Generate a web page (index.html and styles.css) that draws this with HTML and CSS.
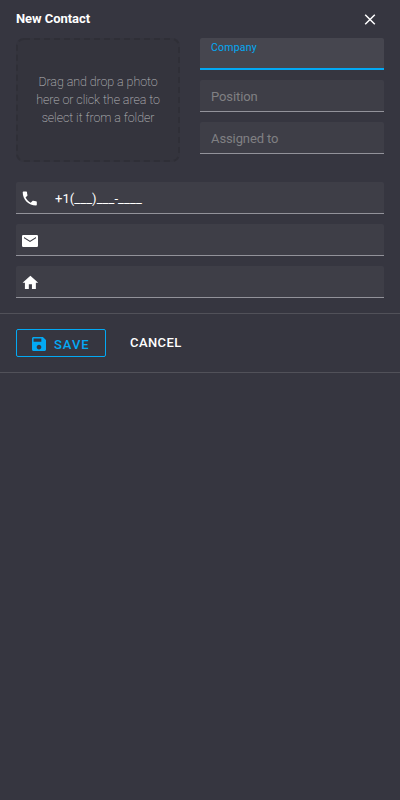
FILE: index.html
```html
<!DOCTYPE html>
<html lang="en">
<head>
<meta charset="utf-8">
<title>New Contact</title>
<link rel="stylesheet" href="styles.css">
</head>
<body>
<main class="form">
  <header class="header">
    <h1 class="title">New Contact</h1>
    <button class="close" aria-label="Close"><svg width="12" height="12" viewBox="0 0 12 12"><path d="M1.200 1.700l9.600 9.600M10.800 1.700l-9.600 9.600" stroke="currentColor" stroke-width="1.500"/></svg></button>
  </header>
  <section class="top">
    <div class="drop"><svg class="outline" width="164" height="124"><rect x="1" y="1" width="162" height="122" rx="7"/></svg><p class="hint">Drag and drop a photo here or click the area to select it from a folder</p></div>
    <div class="fields">
      <div class="field focused"><span class="label">Company</span></div>
      <div class="field"><span class="placeholder">Position</span></div>
      <div class="field"><span class="placeholder">Assigned to</span></div>
    </div>
  </section>
  <section class="fields contact">
    <div class="field"><svg class="icon" width="18" height="18" viewBox=".8 1.200 23 23"><path d="M6.62 10.79c1.44 2.83 3.76 5.14 6.59 6.59l2.2-2.2c.27-.27.67-.36 1.02-.24 1.12.37 2.33.57 3.57.57.55 0 1 .45 1 1V20c0 .55-.45 1-1 1-9.39 0-17-7.61-17-17 0-.55.45-1 1-1h3.5c.55 0 1 .45 1 1 0 1.25.2 2.45.57 3.57.11.35.03.74-.25 1.02l-2.2 2.2z"/></svg><span class="value">+1(___)___-____</span></div>
    <div class="field"><svg class="icon" width="18" height="18" viewBox="0 0 18 18"><path fill-rule="evenodd" d="M2.2 3h13.6A1.2 1.2 0 0 1 17 4.200v9.600a1.200 1.200 0 0 1-1.200 1.200H2.200A1.200 1.200 0 0 1 1 13.800V4.200A1.200 1.200 0 0 1 2.200 3zM15 5L9 8.700 3 5v1.300l6 3.700 6-3.700z"/></svg></div>
    <div class="field"><svg class="icon" width="18" height="18" viewBox="0 .9 23 23"><path d="M10 20v-6h4v6h5v-8h3L12 3 2 12h3v8z"/></svg></div>
  </section>
</main>
<footer class="toolbar">
  <button class="save"><svg class="save-icon" width="14" height="14" viewBox="3 3 18 18"><path d="M17 3H5c-1.110 0-2 .9-2 2v14c0 1.100.890 2 2 2h14c1.100 0 2-.9 2-2V7l-4-4zm-5 16c-1.660 0-3-1.340-3-3s1.340-3 3-3 3 1.340 3 3-1.340 3-3 3zm3-10H5V5h10v4z"/></svg><span>SAVE</span></button>
  <button class="cancel">CANCEL</button>
</footer>
</body>
</html>
```
FILE: styles.css
```css
* { box-sizing: border-box; }
body {
  margin: 0;
  min-height: 100vh;
  background: #363640;
  color: #fff;
  font: 13px/18px Roboto, sans-serif;
}
button { border: 0; padding: 0; margin: 0; background: none; color: inherit; font: inherit; }
svg { display: block; fill: currentColor; flex: none; }
.form { padding: 0 16px 15px; }
.header { display: flex; justify-content: space-between; height: 38px; padding-right: 8px; }
.title { margin: 9px 0 0; font-size: 13px; line-height: 19px; font-weight: 700; letter-spacing: -.06px; }
.close { align-self: flex-start; margin-top: 13px; }
.top { display: grid; grid-template-columns: 164px 184px; gap: 20px; }
.drop {
  position: relative;
  display: flex;
  align-items: center;
  justify-content: center;
  height: 124px;
  border-radius: 8px;
  background: #34343d;
}
.outline { position: absolute; inset: 0; fill: none; stroke: #2f2f37; stroke-width: 2; stroke-dasharray: 6 4; }
.hint { margin: 0; width: 128px; text-align: center; font-size: 12.5px; font-weight: 200; color: #b4b4b9; letter-spacing: -.08px; }
.fields { display: flex; flex-direction: column; gap: 10px; }
.field {
  display: flex;
  align-items: center;
  height: 32px;
  padding-left: 11px;
  background: #3e3e47;
  border-bottom: 1px solid #92929a;
  border-radius: 2px 2px 0 0;
}
.focused { align-items: flex-start; background: #46464f; border-bottom: 2px solid #03a9f4; }
.label { margin-top: 3px; font-size: 10.5px; line-height: 13px; color: #03a9f4; letter-spacing: .2px; }
.placeholder { color: #808083; padding-top: 2px; letter-spacing: -.1px; }
.contact { margin-top: 20px; }
.contact .field { padding-left: 5px; }
.icon { margin-top: 2px; }
.value { margin: 2px 0 0 16px; letter-spacing: .06px; }
.toolbar {
  display: flex;
  gap: 24px;
  height: 60px;
  padding: 15px 16px;
  border: solid #515159;
  border-width: 1px 0;
}
.save {
  display: flex;
  align-items: center;
  width: 90px;
  height: 28px;
  padding: 4px 0 0 15px;
  border: 1px solid #03a9f4;
  border-radius: 2px;
  color: #03a9f4;
  font-weight: 500;
  letter-spacing: 1px;
}
.save-icon { margin-bottom: 2px; }
.save span { margin-left: 8px; }
.cancel { height: 28px; font-weight: 500; letter-spacing: .4px; }
```
